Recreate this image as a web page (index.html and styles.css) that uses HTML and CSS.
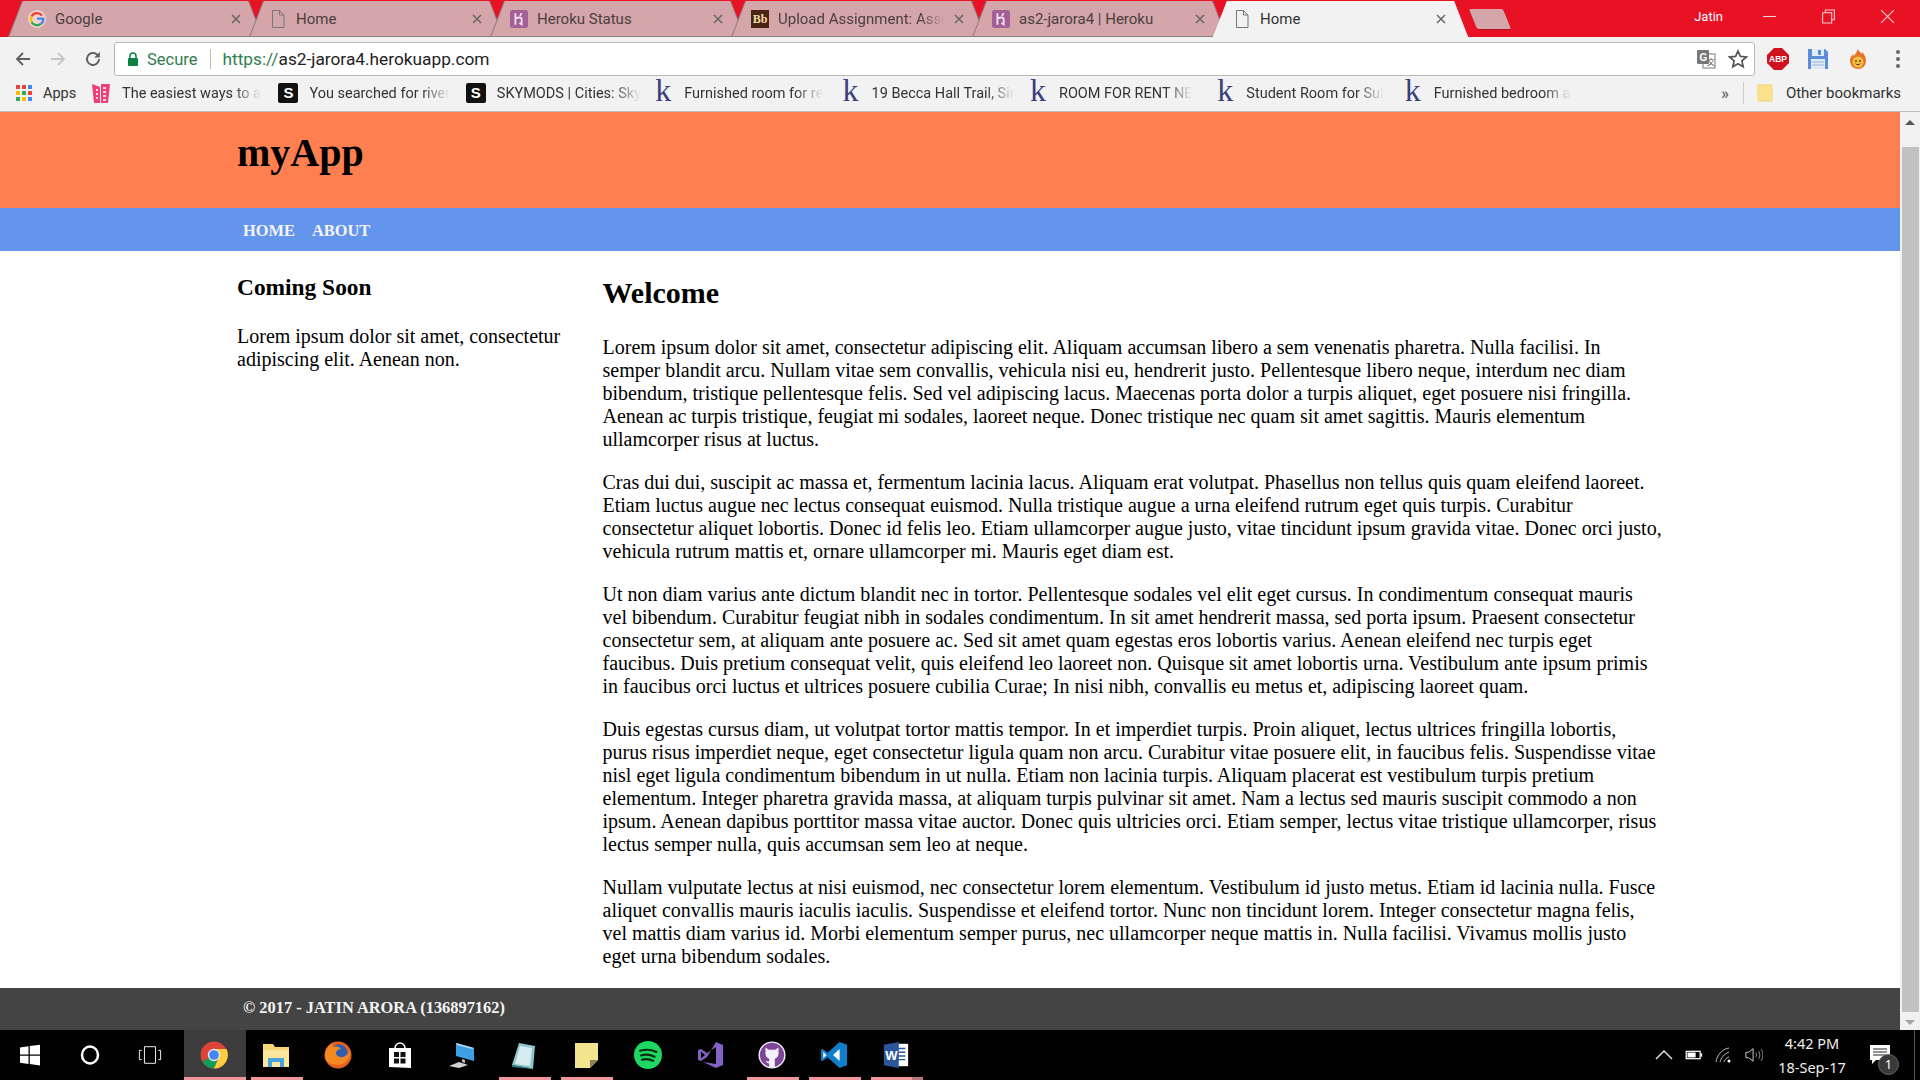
FILE: index.html
```html
<!DOCTYPE html>
<html lang="en">
<head>
<meta charset="utf-8">
<title>Home</title>
<link rel="stylesheet" href="styles.css">
</head>
<body>
<svg class="defs" width="0" height="0" aria-hidden="true">
  <symbol id="doc" viewBox="0 0 16 18"><path d="M2.5 .5h7l4.500 4.500v12.500h-11.500z M9.500 .5v4.500h4.500" fill="none" stroke="#777" stroke-width="1"/></symbol>
  <symbol id="her" viewBox="0 0 20 20"><rect width="20" height="20" rx="3" fill="#a45f97"/><path d="M6 3.500v13M6 9.500c3-1.500 7-2 7 1v5.500l-2.500-1.500M13 3.500l-2 3" fill="none" stroke="#f2e3ef" stroke-width="2"/></symbol>
  <symbol id="x" viewBox="0 0 10 10"><path d="M1 1l8 8M9 1l-8 8" stroke="#666" stroke-width="1.500" fill="none"/></symbol>
</svg>

<div class="chrome">
  <div class="tabstrip">
    <div class="tabs">
      <div class="tab">
        <svg class="fav" viewBox="0 0 20 20"><circle cx="10" cy="10" r="10" fill="#f3d3d0"/><path d="M15.500 6A7 7 0 0 0 4 7" fill="none" stroke="#e94235" stroke-width="2.600"/><path d="M4 7a7 7 0 0 0 0 6.500" fill="none" stroke="#fabb05" stroke-width="2.600"/><path d="M4 13.500a7 7 0 0 0 10.500 1.800" fill="none" stroke="#34a853" stroke-width="2.600"/><path d="M14.500 15.300A6.500 6.500 0 0 0 17 9.500h-7" fill="none" stroke="#4285f4" stroke-width="2.600"/></svg>
        <span class="tab-title">Google</span><svg class="tab-x"><use href="#x"/></svg>
      </div>
      <div class="tab"><svg class="fav"><use href="#doc"/></svg><span class="tab-title">Home</span><svg class="tab-x"><use href="#x"/></svg></div>
      <div class="tab"><svg class="fav"><use href="#her"/></svg><span class="tab-title">Heroku Status</span><svg class="tab-x"><use href="#x"/></svg></div>
      <div class="tab"><span class="fav bb">Bb</span><span class="tab-title fade">Upload Assignment: Assi</span><svg class="tab-x"><use href="#x"/></svg></div>
      <div class="tab"><svg class="fav"><use href="#her"/></svg><span class="tab-title">as2-jarora4 | Heroku</span><svg class="tab-x"><use href="#x"/></svg></div>
      <div class="tab active"><svg class="fav"><use href="#doc"/></svg><span class="tab-title">Home</span><svg class="tab-x"><use href="#x"/></svg></div>
    </div>
    <div class="newtab"></div>
    <div class="winctl">
      <span class="user">Jatin</span>
      <svg class="wc" viewBox="0 0 14 14"><path d="M1 7h12" stroke="#f7d0d4" stroke-width="1"/></svg>
      <svg class="wc" viewBox="0 0 14 14"><path d="M1.500 3.500h8.500v9.500h-8.500zM4 3.500v-2.500h8.500v9h-2.500" fill="none" stroke="#f7d0d4" stroke-width="1"/></svg>
      <svg class="wc" viewBox="0 0 14 14"><path d="M1 1l12 12M13 1l-12 12" stroke="#f7d0d4" stroke-width="1"/></svg>
    </div>
  </div>

  <div class="toolbar">
    <svg class="nav-ic" viewBox="0 0 18 18"><path d="M16 9H3M9 3L3 9l6 6" fill="none" stroke="#5f5f5f" stroke-width="1.800"/></svg>
    <svg class="nav-ic" viewBox="0 0 18 18"><path d="M2 9h13M9 3l6 6-6 6" fill="none" stroke="#c6c6c6" stroke-width="1.800"/></svg>
    <svg class="nav-ic" viewBox="0 0 18 18"><path d="M15 9a6 6 0 1 1-1.800-4.300" fill="none" stroke="#5f5f5f" stroke-width="1.900"/><path d="M15.800 1.800v5.600h-5.600z" fill="#5f5f5f"/></svg>
    <div class="omnibox">
      <svg class="lock" viewBox="0 0 12 14"><path d="M3 6V4a3 3 0 0 1 6 0v2" fill="none" stroke="#0b8043" stroke-width="1.500"/><rect x="1" y="6" width="10" height="8" rx="1" fill="#0b8043"/></svg>
      <span class="secure">Secure</span>
      <span class="omni-sep"></span>
      <span class="url"><span class="scheme">https://</span>as2-jarora4.herokuapp.com</span>
      <svg class="translate" viewBox="0 0 20 20"><rect x="7" y="5" width="12" height="14" fill="#fff" stroke="#777"/><rect x="1" y="1" width="12" height="14" rx="1" fill="#777"/><text x="3.500" y="12" class="tr-g">G</text><text x="11" y="16" class="tr-a">文</text></svg>
      <svg class="star" viewBox="0 0 20 20"><path d="M10 2l2.400 5.400 5.900.6-4.400 3.900 1.300 5.800L10 14.700l-5.200 3 1.300-5.800L1.700 8l5.900-.6z" fill="none" stroke="#555" stroke-width="1.700"/></svg>
    </div>
    <div class="ext">
      <svg class="ext-ic" viewBox="0 0 22 22"><path d="M7 0h8l7 7v8l-7 7H7l-7-7V7z" fill="#d0121f"/><text x="11" y="14.200" class="abp">ABP</text></svg>
      <svg class="ext-ic" viewBox="0 0 22 22"><path d="M1 1h17l3 3v17H1z" fill="#5a8fd8"/><rect x="5" y="1" width="12" height="7" fill="#e4ecf7"/><rect x="11" y="2" width="3" height="5" fill="#5a8fd8"/><rect x="4" y="11" width="14" height="10" fill="#dfe7f2"/><path d="M5 14h12M5 17h12" stroke="#9db7d9"/></svg>
      <svg class="ext-ic" viewBox="0 0 22 22"><path d="M11 1c1 3 3 3 3 5 1-1 1-2 1-2 3 3 4 6 4 9a8 8 0 0 1-16 0c0-4 2-5 3-7 0 1 1 2 1 2 1-2 3-4 4-7z" fill="#e8732a"/><circle cx="11" cy="14" r="5.500" fill="#f6c343"/><circle cx="9" cy="13" r=".9" fill="#5a3312"/><circle cx="13" cy="13" r=".9" fill="#5a3312"/><path d="M8.500 15.500c1 1.600 4 1.600 5 0" stroke="#5a3312" fill="none"/></svg>
      <svg class="ext-ic" viewBox="0 0 22 22"><circle cx="11" cy="4" r="2" fill="#666"/><circle cx="11" cy="11" r="2" fill="#666"/><circle cx="11" cy="18" r="2" fill="#666"/></svg>
    </div>
  </div>

  <div class="bookmarks">
    <div class="bm bm-apps">
      <svg class="bm-ic" viewBox="0 0 18 18"><g fill="#e8453c"><rect x="1" y="1" width="4" height="4"/><rect x="7" y="1" width="4" height="4"/></g><rect x="13" y="1" width="4" height="4" fill="#4285f4"/><rect x="1" y="7" width="4" height="4" fill="#fbbc05"/><rect x="7" y="7" width="4" height="4" fill="#34a853"/><rect x="13" y="7" width="4" height="4" fill="#ea4335"/><rect x="1" y="13" width="4" height="4" fill="#34a853"/><rect x="7" y="13" width="4" height="4" fill="#fbbc05"/><rect x="13" y="13" width="4" height="4" fill="#4285f4"/></svg>
      <span>Apps</span>
    </div>
    <div class="bm">
      <svg class="bm-ic" viewBox="0 0 20 20"><path d="M1 1l8 3v16H3zM10 1h9l-2 19h-7z" fill="#ec407a"/><path d="M5 7h2M5 11h2M5 15h2M12 5h3M12 9h3M12 13h3M12 17h3" stroke="#fff" stroke-width="1.300"/></svg>
      <span class="bm-t">The easiest ways to a</span>
    </div>
    <div class="bm"><span class="bm-s">S</span><span class="bm-t">You searched for river</span></div>
    <div class="bm"><span class="bm-s">S</span><span class="bm-t">SKYMODS | Cities: Sky</span></div>
    <div class="bm"><span class="bm-k">k</span><span class="bm-t">Furnished room for re</span></div>
    <div class="bm"><span class="bm-k">k</span><span class="bm-t">19 Becca Hall Trail, Sir</span></div>
    <div class="bm"><span class="bm-k">k</span><span class="bm-t">ROOM FOR RENT NE</span></div>
    <div class="bm"><span class="bm-k">k</span><span class="bm-t">Student Room for Sul</span></div>
    <div class="bm"><span class="bm-k">k</span><span class="bm-t">Furnished bedroom a</span></div>
    <div class="bm-right">
      <span class="chev">»</span>
      <span class="bm-sep"></span>
      <svg class="bm-folder" viewBox="0 0 16 18"><path d="M1 1h14v16H1z" fill="#fbe38e"/><path d="M1 1h14v16H1z" fill="none" stroke="#f1d470"/></svg>
      <span class="bm-other">Other bookmarks</span>
    </div>
  </div>
</div>

<div class="viewport">
  <div class="page">
    <header class="site-header"><div class="wrap"><h1>myApp</h1></div></header>
    <nav class="site-nav"><div class="wrap nav-links"><a>HOME</a><a>ABOUT</a></div></nav>
    <main class="wrap content">
      <aside class="side">
        <h3>Coming Soon</h3>
        <p>Lorem ipsum dolor sit amet, consectetur adipiscing elit. Aenean non.</p>
      </aside>
      <article class="article">
        <h2>Welcome</h2>
        <p>Lorem ipsum dolor sit amet, consectetur adipiscing elit. Aliquam accumsan libero a sem venenatis pharetra. Nulla facilisi. In semper blandit arcu. Nullam vitae sem convallis, vehicula nisi eu, hendrerit justo. Pellentesque libero neque, interdum nec diam bibendum, tristique pellentesque felis. Sed vel adipiscing lacus. Maecenas porta dolor a turpis aliquet, eget posuere nisi fringilla. Aenean ac turpis tristique, feugiat mi sodales, laoreet neque. Donec tristique nec quam sit amet sagittis. Mauris elementum ullamcorper risus at luctus.</p>
        <p>Cras dui dui, suscipit ac massa et, fermentum lacinia lacus. Aliquam erat volutpat. Phasellus non tellus quis quam eleifend laoreet. Etiam luctus augue nec lectus consequat euismod. Nulla tristique augue a urna eleifend rutrum eget quis turpis. Curabitur consectetur aliquet lobortis. Donec id felis leo. Etiam ullamcorper augue justo, vitae tincidunt ipsum gravida vitae. Donec orci justo, vehicula rutrum mattis et, ornare ullamcorper mi. Mauris eget diam est.</p>
        <p>Ut non diam varius ante dictum blandit nec in tortor. Pellentesque sodales vel elit eget cursus. In condimentum consequat mauris vel bibendum. Curabitur feugiat nibh in sodales condimentum. In sit amet hendrerit massa, sed porta ipsum. Praesent consectetur consectetur sem, at aliquam ante posuere ac. Sed sit amet quam egestas eros lobortis varius. Aenean eleifend nec turpis eget faucibus. Duis pretium consequat velit, quis eleifend leo laoreet non. Quisque sit amet lobortis urna. Vestibulum ante ipsum primis in faucibus orci luctus et ultrices posuere cubilia Curae; In nisi nibh, convallis eu metus et, adipiscing laoreet quam.</p>
        <p>Duis egestas cursus diam, ut volutpat tortor mattis tempor. In et imperdiet turpis. Proin aliquet, lectus ultrices fringilla lobortis, purus risus imperdiet neque, eget consectetur ligula quam non arcu. Curabitur vitae posuere elit, in faucibus felis. Suspendisse vitae nisl eget ligula condimentum bibendum in ut nulla. Etiam non lacinia turpis. Aliquam placerat est vestibulum turpis pretium elementum. Integer pharetra gravida massa, at aliquam turpis pulvinar sit amet. Nam a lectus sed mauris suscipit commodo a non ipsum. Aenean dapibus porttitor massa vitae auctor. Donec quis ultricies orci. Etiam semper, lectus vitae tristique ullamcorper, risus lectus semper nulla, quis accumsan sem leo at neque.</p>
        <p>Nullam vulputate lectus at nisi euismod, nec consectetur lorem elementum. Vestibulum id justo metus. Etiam id lacinia nulla. Fusce aliquet convallis mauris iaculis iaculis. Suspendisse et eleifend tortor. Nunc non tincidunt lorem. Integer consectetur magna felis, vel mattis diam varius id. Morbi elementum semper purus, nec ullamcorper neque mattis in. Nulla facilisi. Vivamus mollis justo eget urna bibendum sodales.</p>
      </article>
    </main>
    <footer class="site-footer"><div class="wrap footer-text">© 2017 - JATIN ARORA (136897162)</div></footer>
  </div>
  <div class="scrollbar">
    <span class="arrow up"></span>
    <span class="thumb"></span>
    <span class="arrow down"></span>
  </div>
</div>

<div class="taskbar">
  <div class="tb-sys">
    <svg class="tb-ic" viewBox="0 0 24 24"><path d="M2 4.500l8.500-1.200v8.200H2zM11.800 3.100L22 1.700v9.800H11.800zM2 12.800h8.500v8.200L2 19.800zM11.800 12.800H22v9.700l-10.200-1.400z" fill="#fff"/></svg>
  </div>
  <div class="tb-sys">
    <svg class="tb-ic" viewBox="0 0 24 24"><ellipse cx="12" cy="12" rx="8" ry="8.500" fill="none" stroke="#fff" stroke-width="2.500"/></svg>
  </div>
  <div class="tb-sys tb-sys-last">
    <svg class="tb-ic" viewBox="0 0 26 24"><path d="M7 3h12v18H7z" fill="none" stroke="#fff" stroke-width="1"/><path d="M4 7H1.500v10H4M22 7h2.500v10H22" fill="none" stroke="#fff" stroke-width="1"/></svg>
  </div>

  <div class="tb-app is-active">
    <svg class="tb-ic" viewBox="0 0 28 28"><circle cx="14" cy="14" r="13.500" fill="#db4437"/><path d="M14 14L2.500 20.500A13.500 13.500 0 0 0 14 27.500L20 14z" fill="#0f9d58"/><path d="M14 8h12.500A13.500 13.500 0 0 1 14 27.500L20 14z" fill="#ffcd40"/><circle cx="14" cy="14" r="6.200" fill="#e8e8e8"/><circle cx="14" cy="14" r="4.800" fill="#4285f4"/></svg>
  </div>
  <div class="tb-app is-open">
    <svg class="tb-ic" viewBox="0 0 28 28"><path d="M1 3h10l2 3h14v20H1z" fill="#f7d774"/><path d="M1 9h26v17H1z" fill="#fbe69c"/><path d="M6 26V17h16v9h-4v-5h-8v5z" fill="#4aa3df"/></svg>
  </div>
  <div class="tb-app">
    <svg class="tb-ic" viewBox="0 0 28 28"><circle cx="14" cy="14" r="13.500" fill="#e8601f"/><circle cx="15" cy="12" r="8.500" fill="#2f5fb3"/><path d="M1 14C2 7 6 3 9 2c-1 2-1 3 0 4 2-1 6-1 8 2-3 0-5 2-5 4s3 5 7 4c3-1 5-3 7-7 1 8-5 15-12 15S1 21 1 14z" fill="#f28a24"/></svg>
  </div>
  <div class="tb-app">
    <svg class="tb-ic" viewBox="0 0 28 28"><path d="M9 7a5 5 0 0 1 10 0" fill="none" stroke="#fff" stroke-width="1.500"/><path d="M3 7l22 0v20l-22-1z" fill="#fff"/><path d="M8 11h5v5H8zM14.500 11h5v5h-5zM8 17.500h5v5H8zM14.500 17.500h5v5h-5z" fill="#111"/></svg>
  </div>
  <div class="tb-app">
    <svg class="tb-ic" viewBox="0 0 28 28"><path d="M8 2l18 5v13L8 15z" fill="#3ea0e4"/><path d="M8 2l18 5-2 1L9 4z" fill="#b6ddf6"/><path d="M14 18l3 1v3l-3-1z" fill="#bbb"/><path d="M1 25l10-4 9 3-9 3z" fill="#d2d2d2"/></svg>
  </div>
  <div class="tb-app is-open">
    <svg class="tb-ic" viewBox="0 0 28 28"><path d="M2 24L9 2l16 3-2 23z" fill="#8fc7c8"/><path d="M5 23L10 5l12 2-2 18z" fill="#d6ecee"/><path d="M2 24l18 3 3 1-21-2z" fill="#3b7c8c"/></svg>
  </div>
  <div class="tb-app is-open">
    <svg class="tb-ic" viewBox="0 0 28 28"><path d="M3 2h23v17l-8 8H3z" fill="#f3e48f"/><path d="M18 27v-8h8z" fill="#8a8455"/></svg>
  </div>
  <div class="tb-app">
    <svg class="tb-ic" viewBox="0 0 30 30"><circle cx="15" cy="15" r="15" fill="#1ed760"/><path d="M6.500 10.500c6-1.800 12-1.500 17.500 1.200M7.500 15.500c5-1.400 10-1 14.500 1.300M8.500 20c4-1 8-.8 12 1.200" fill="none" stroke="#0c2b17" stroke-width="2.300" stroke-linecap="round"/></svg>
  </div>
  <div class="tb-app">
    <svg class="tb-ic" viewBox="0 0 28 28"><path d="M20 1l7 3v20l-7 3-13-6 13 2V6l-9 6-6-4-3 1v10l3 1 6-4z" fill="#8661c5"/><path d="M5 10.500v7l4-3.500z" fill="#050505"/></svg>
  </div>
  <div class="tb-app is-open">
    <svg class="tb-ic" viewBox="0 0 30 30"><circle cx="15" cy="15" r="14.500" fill="#f3eef7"/><circle cx="15" cy="15" r="13" fill="#7d4698"/><path d="M8 7l3.500 2.500h7L22 7v7a6 6 0 0 1-4 5v9h-6v-4c-2 0-3-1-4-3 1 .5 2.500 1.500 4 .8V19a6 6 0 0 1-4-5z" fill="#f5f0f8"/></svg>
  </div>
  <div class="tb-app is-open">
    <svg class="tb-ic" viewBox="0 0 30 30"><path d="M21 1l8 3v22l-8 3L8 17.500l-5 4-2-1v-11l2-1 5 4z" fill="#0f7fcb"/><path d="M21 8.500l-7 6.500 7 6.500zM3.500 11.500v7l3.500-3.500z" fill="#fff"/></svg>
  </div>
  <div class="tb-app is-open is-many">
    <svg class="tb-ic" viewBox="0 0 30 30"><path d="M13 3h15v24H13z" fill="#fff"/><path d="M16 8h9M16 12h9M16 16h9M16 20h9" stroke="#2b579a" stroke-width="1.500"/><path d="M2 4l16-3v28L2 26z" fill="#2b579a"/><text x="10" y="20" class="word">W</text></svg>
  </div>

  <div class="tray">
    <svg class="tray-ic" viewBox="0 0 18 18"><path d="M1 13l8-8 8 8" fill="none" stroke="#eee" stroke-width="1.300"/></svg>
    <svg class="tray-ic" viewBox="0 0 22 18"><rect x="1.500" y="4.500" width="17" height="9" fill="none" stroke="#fff" stroke-width="1.500"/><rect x="3" y="6" width="10" height="6" fill="#fff"/><rect x="19" y="7" width="2" height="4" fill="#fff"/></svg>
    <svg class="tray-ic" viewBox="0 0 18 18"><path d="M1 16C2 9 7 3 14 2M5 16c1-4 4-8 9-10M9 16c.5-2 2-4 5-5" fill="none" stroke="#bbb" stroke-width="1"/><circle cx="14" cy="15" r="1.500" fill="#fff"/></svg>
    <svg class="tray-ic" viewBox="0 0 20 18"><path d="M1 6h3l5-4v14l-5-4H1z" fill="none" stroke="#ddd"/><path d="M12 6.500c1 1.500 1 3.500 0 5M15 4.500c2 3 2 6 0 9M18 2.500c2.500 4 2.500 9 0 13" fill="none" stroke="#999"/></svg>
    <div class="clock"><span>4:42 PM</span><span>18-Sep-17</span></div>
    <div class="notif">
      <svg class="notif-ic" viewBox="0 0 20 20"><path d="M0 0h20v15H6l-4 4v-4H0z" fill="#fff"/><path d="M3 4h14M3 7h14M3 10h14" stroke="#222"/></svg>
      <span class="badge">1</span>
    </div>
  </div>
</div>
</body>
</html>
```

FILE: styles.css
```css
* { box-sizing: border-box; }
html, body { margin: 0; padding: 0; }
body {
  width: 1920px;
  height: 1080px;
  overflow: hidden;
  display: flex;
  flex-direction: column;
  font-family: "Liberation Serif", serif;
  background: #fff;
}
.defs { position: absolute; }

/* browser chrome */
.chrome { flex: none; height: 112px; display: flex; flex-direction: column; font-family: Roboto, "Noto Sans", sans-serif; color: #333; }
.tabstrip { flex: none; height: 37px; background: #e81224; display: flex; align-items: flex-start; padding-left: 8px; }
.tabs { display: flex; height: 37px; }
.tab {
  position: relative;
  width: 255px;
  height: 36px;
  margin-top: 1px;
  margin-right: -14px;
  padding: 0 22px 1px 20px;
  display: flex;
  align-items: center;
  gap: 9px;
  background: #8d7f80;
  clip-path: polygon(0 100%, 14px 0, calc(100% - 14px) 0, 100% 100%);
  font-size: 15px;
  color: #4a4040;
}
.tab::before {
  content: "";
  position: absolute;
  inset: 0;
  background: #d4a5a9;
  clip-path: polygon(1.500px calc(100% - 1px), 15px 0, calc(100% - 15px) 0, calc(100% - 1.500px) calc(100% - 1px));
}
.tab > * { position: relative; }
.tab.active { background: #f2f2f2; height: 36px; color: #333; }
.tab.active::before { background: #f2f2f2; clip-path: none; }
.fav { flex: none; width: 18px; height: 18px; }
.bb { background: #4a2413; color: #f4d9a8; font: bold 12px/18px "Liberation Serif", serif; text-align: center; }
.tab-title { flex: 1; min-width: 0; white-space: nowrap; overflow: hidden; }
.fade { -webkit-mask-image: linear-gradient(90deg, #000 85%, transparent); mask-image: linear-gradient(90deg, #000 85%, transparent); }
.tab-x { flex: none; width: 10px; height: 10px; }
.newtab { width: 34px; height: 20px; margin: 9px 0 0 19px; background: #d4a5a9; transform: skewX(22deg); border-radius: 2px; box-shadow: 0 1px 0 #b5101f; }
.winctl { margin-left: auto; height: 36px; padding-right: 4px; display: flex; align-items: center; color: #fff; font-size: 13px; }
.user { margin-right: 16px; margin-top: -4px; }
.wc { width: 15px; height: 15px; margin: -4px 21px 0 23px; }

.toolbar { flex: none; height: 41px; padding: 3px 0 0 14px; background: #f2f2f2; display: flex; align-items: center; }
.nav-ic { flex: none; width: 18px; height: 18px; margin-right: 17px; }
.omnibox {
  width: 1641px;
  margin-left: -5px;
  height: 34px;
  background: #fff;
  border: 1px solid #b9b9b9;
  border-radius: 3px;
  display: flex;
  align-items: center;
  padding-left: 12px;
}
.lock { width: 12px; height: 14px; flex: none; }
.secure { color: #2f7d4f; margin-left: 8px; font-size: 16.500px; }
.omni-sep { width: 1px; height: 20px; background: #bbb; margin: 0 11px 0 13px; }
.url { color: #222; flex: 1; font-size: 17.300px; }
.scheme { color: #2f7d4f; }
.translate { width: 20px; height: 20px; margin-right: 12px; flex: none; }
.tr-g { font: bold 10px "Liberation Sans", sans-serif; fill: #fff; }
.tr-a { font: 8px "Noto Sans CJK SC", sans-serif; fill: #555; }
.star { width: 20px; height: 20px; margin-right: 6px; flex: none; }
.ext { display: flex; align-items: center; margin-left: 12px; gap: 18px; }
.ext-ic { width: 22px; height: 22px; flex: none; }
.abp { font: bold 8.500px "Liberation Sans", sans-serif; fill: #fff; text-anchor: middle; }

.bookmarks { flex: none; height: 34px; padding: 0 0 3px 13px; background: #f2f2f2; border-bottom: 1px solid #bdbdbd; display: flex; align-items: center; font-size: 14.500px; color: #333; }
.bm { flex: none; width: 187.400px; display: flex; align-items: center; gap: 11px; padding-left: 2px; }
.bm-apps { width: 76px; gap: 10px; }
.bm-ic { width: 20px; height: 20px; flex: none; }
.bm-apps .bm-ic { width: 18px; height: 18px; }
.bm-s { width: 20px; height: 20px; flex: none; background: #111; border-radius: 2px; color: #fff; font: bold 15px/20px "Liberation Sans", sans-serif; text-align: center; }
.bm-k { width: 20px; flex: none; color: #3a3f7d; font: 32px/28px "Liberation Serif", serif; text-align: center; margin-top: -6px; }
.bm-t { white-space: nowrap; -webkit-mask-image: linear-gradient(90deg, #000 80%, transparent); mask-image: linear-gradient(90deg, #000 80%, transparent); }
.bm-right { margin-left: auto; display: flex; align-items: center; padding-right: 19px; }
.chev { font-size: 17px; color: #555; margin-right: 14px; }
.bm-sep { width: 1px; height: 22px; background: #ccc; margin-right: 13px; }
.bm-folder { width: 16px; height: 18px; margin-right: 13px; }
.bm-other { font-size: 15px; }

/* page */
.viewport { flex: none; height: 918px; display: flex; }
.page { flex: 1; min-width: 0; display: flex; flex-direction: column; font-size: 20px; color: #000; }
.wrap { width: 1426px; margin: 0 auto; }
.site-header { flex: none; height: 96px; background: coral; }
.site-header h1 { margin: 0; padding-top: 18px; font-size: 40px; line-height: 46px; }
.site-nav { flex: none; height: 43px; background: cornflowerblue; }
.nav-links { display: flex; gap: 17px; padding: 14px 0 0 6px; font-size: 16.400px; line-height: 18px; font-weight: bold; color: #f4f4f4; }
.content { flex: 1; display: grid; grid-template-columns: 365.500px 1fr; }
.side { width: 340px; padding-top: 23px; }
.side h3 { margin: 0 0 24px; font-size: 23.400px; line-height: 27px; }
.side p { margin: 0; line-height: 23px; }
.article { padding: 24px 1px 0 0; }
.article h2 { margin: 0 0 26px; font-size: 30px; line-height: 35px; }
.article p { margin: 0 0 20px; line-height: 23px; }
.site-footer { flex: none; height: 43px; background: #444; }
.footer-text { padding: 11px 0 0 6px; font-size: 16.400px; line-height: 18px; font-weight: bold; color: #f4f4f4; }

.scrollbar { flex: none; width: 20px; background: #f1f1f1; display: flex; flex-direction: column; align-items: center; }
.arrow { flex: none; width: 0; height: 0; border-left: 5px solid transparent; border-right: 5px solid transparent; }
.arrow.up { border-bottom: 5px solid #555; margin: 8px 0 22px; }
.thumb { flex: 1; width: 17px; background: #c1c1c1; }
.arrow.down { border-top: 5px solid #a3a3a3; margin: 8px 0 5px; }

/* taskbar */
.taskbar { flex: none; height: 50px; background: #030202; display: flex; align-items: center; }
.tb-sys { flex: none; width: 60px; height: 50px; display: flex; align-items: center; justify-content: center; }
.tb-sys-last { margin-right: 4px; }
.tb-app { position: relative; flex: none; width: 62px; height: 50px; padding-right: 2px; display: flex; align-items: center; justify-content: center; }
.tb-ic { width: 28px; height: 30px; }
.tb-sys .tb-ic { width: 24px; height: 24px; }
.tb-app.is-active { background: #3c3c3c; }
.tb-app.is-active::after, .tb-app.is-open::after {
  content: "";
  position: absolute;
  left: 5px;
  right: 5px;
  bottom: 0;
  height: 3px;
  background: #f0959c;
}
.tb-app.is-active::after { left: 0; right: 0; }
.is-many::before { content: ""; position: absolute; right: 5px; bottom: 0; width: 11px; height: 3px; background: #b8757b; z-index: 1; }
.word { font: bold 14px "Liberation Sans", sans-serif; fill: #fff; text-anchor: middle; }
.tray { margin-left: auto; display: flex; align-items: center; height: 50px; padding-right: 5px; color: #eee; }
.tray-ic { width: 18px; height: 18px; margin-right: 12px; flex: none; }
.clock { display: flex; flex-direction: column; align-items: center; font-family: "Noto Sans", sans-serif; font-size: 14.500px; line-height: 24px; width: 74px; margin-right: 3px; }
.notif { position: relative; width: 63px; height: 50px; border-right: 1px solid #555; }
.notif-ic { position: absolute; left: 18px; top: 15px; width: 20px; height: 20px; }
.badge { position: absolute; left: 26px; top: 24px; width: 21px; height: 21px; border-radius: 50%; background: #3a3a3a; border: 1px solid #666; color: #fff; font: 13px/19px "Noto Sans", sans-serif; text-align: center; }
```
